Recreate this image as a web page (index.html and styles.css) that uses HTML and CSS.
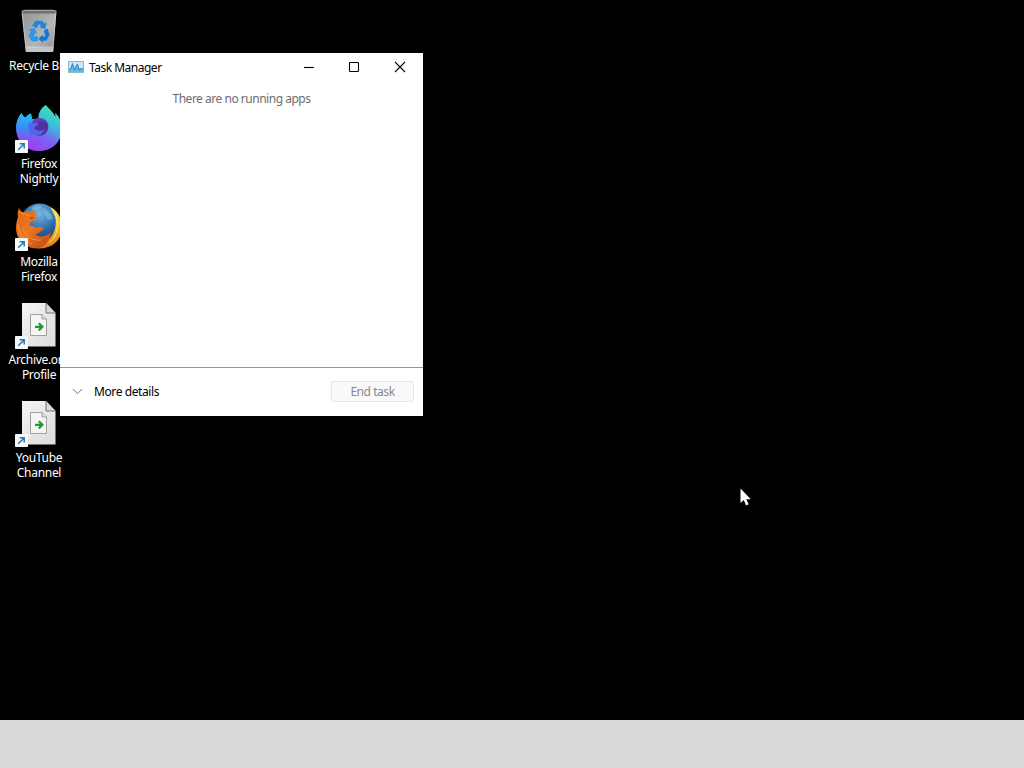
FILE: index.html
```
<!DOCTYPE html>
<html lang="en">
<head>
    <meta charset="utf-8" />
    <meta name="viewport" content="width=device-width, initial-scale=1.0" />
    <title>Desktop</title>
    <link rel="stylesheet" href="styles.css">
</head>
<body>
    <!-- shared shapes -->
    <svg class="defs" width="0" height="0">
        <defs>
            <linearGradient id="paper" x1="0" y1="0" x2="1" y2="1">
                <stop offset="0" stop-color="#f4f4f4"/>
                <stop offset="1" stop-color="#dcdcdc"/>
            </linearGradient>
            <g id="shortcut">
                <rect x="0" y="35" width="13" height="13" rx="0.8" fill="#f5f9fc"/>
                <path d="M3.2 44.8 8.8 39.2M4.6 38.8H9.2V43.6" fill="none" stroke="#2878b4" stroke-width="1.5"/>
            </g>
            <g id="file">
                <path d="M7 2H31L40.5 12V45.5H7Z" fill="url(#paper)"/>
                <path d="M31 2V12H40.5Z" fill="#d6dadb"/>
                <path d="M31 2V12H40.5" fill="none" stroke="#555" stroke-width="0.8"/>
                <path d="M15.5 13.5H27L31.5 18V34.5H15.5Z" fill="#f5f5f5" stroke="#8c8c8c" stroke-width="0.8"/>
                <path d="M27 13.5V18H31.5" fill="#ddd" stroke="#8c8c8c" stroke-width="0.8"/>
                <path d="M20 25.8H27M23.8 22.2 27.4 25.8 23.8 29.4" fill="none" stroke="#12a12c" stroke-width="2.2"/>
            </g>
        </defs>
    </svg>

    <main class="desktop">
        <div class="icons">
            <div class="icon">
                <svg width="48" height="48" viewBox="0 0 48 48">
                    <defs>
                        <linearGradient id="bin" x1="0" y1="0" x2="1" y2="1">
                            <stop offset="0" stop-color="#8f9192"/>
                            <stop offset="0.6" stop-color="#b4b6b7"/>
                            <stop offset="1" stop-color="#8b8d8e"/>
                        </linearGradient>
                    </defs>
                    <path d="M6.5 4 10 3H38L41.5 4 38 45H11Z" fill="url(#bin)"/>
                    <path d="M7 4.5 10 3.5H38L41 4.5 40.5 6.5H7.5Z" fill="#6f7071"/>
                    <path d="M6.7 4.3 10 3.2H38L41.3 4.3" fill="none" stroke="#b5b5b5" stroke-width="0.8"/>
                    <path d="M7.2 6 11.2 44.5M40.8 6 37.8 44.5" stroke="#d6d6d6" stroke-width="0.7"/>
                    <path d="M10.8 41H38.2L38 45H11.2Z" fill="#c2c3c4"/>
                    <path d="M10.8 40.2H38.3" stroke="#e6e6e6" stroke-width="0.8"/>
                    <path d="M17 18.5 20.5 13.8H27.5L29.5 16.5 31.8 15.5 30.2 22 24 20.2 26 18.9 24 17 21.4 21.3Z" fill="#1e87dd"/>
                    <path d="M13.6 22.2 19.6 21 22 27 19.8 26.2 18.6 29.2H23V34.2H17L13.3 29.3 15.8 24.3Z" fill="#2e95e8"/>
                    <path d="M28.8 23.6 32.6 21.6 34.6 27.8 31.3 33.8H27.8V36L23.3 31.7 27.8 27.4V29.5H30.4Z" fill="#1579cf"/>
                </svg>
                <span class="label">Recycle Bin</span>
            </div>

            <div class="icon">
                <svg width="48" height="48" viewBox="0 0 48 48">
                    <defs>
                        <linearGradient id="nightly" x1="0.8" y1="0" x2="0.3" y2="1">
                            <stop offset="0" stop-color="#3fe7b0"/>
                            <stop offset="0.35" stop-color="#38bfdc"/>
                            <stop offset="0.65" stop-color="#7a62f0"/>
                            <stop offset="1" stop-color="#a13cf0"/>
                        </linearGradient>
                        <linearGradient id="head" x1="0.5" y1="0" x2="0.4" y2="1">
                            <stop offset="0" stop-color="#22bdf5"/>
                            <stop offset="0.45" stop-color="#398cf4"/>
                            <stop offset="1" stop-color="#9a42ee" stop-opacity="0"/>
                        </linearGradient>
                    </defs>
                    <path d="M30.7 0C26 3 23.5 7.5 23.5 12.5L20 14.5 17 14 16 8.5C13.5 9.5 11.5 11 10.5 12.5C8.5 12 7.3 10 6.7 8C3 12 1 18 1.2 24C1.8 38 12 46 24 46C38 46 47 36 47 23C47 17 44 11 40 8L40.5 12C38 7 34 3.5 30.7 0Z" fill="url(#nightly)"/>
                    <path d="M6.7 8C3 12 1 18 1.2 24C2 35 8 41 15 43L14 24C16 19 19 18 22 16C20 14 18 14 17 14L16 8.5C13.5 9.5 11.5 11 10.5 12.5C8.5 12 7.3 10 6.7 8Z" fill="url(#head)"/>
                    <ellipse cx="24.5" cy="22" rx="8.8" ry="8.7" fill="#51309f"/>
                    <path d="M18 15.5C23 11 30 13 33 18C29 16 25 16 20 18Z" fill="#5b43b4"/>
                    <path d="M13 18.5C16 17 20 17.5 24 18.5C23 21 19.5 21 19 23.5C22 26 26 26.5 30 24.5C27 31 19 32.5 14.5 27.5Z" fill="#5563ea"/>
                    <use href="#shortcut"/>
                </svg>
                <span class="label">Firefox Nightly</span>
            </div>

            <div class="icon">
                <svg width="48" height="48" viewBox="0 0 48 48">
                    <defs>
                        <radialGradient id="globe" cx="0.5" cy="0.25" r="0.8">
                            <stop offset="0" stop-color="#75b8de"/>
                            <stop offset="0.5" stop-color="#2d71b4"/>
                            <stop offset="1" stop-color="#102b63"/>
                        </radialGradient>
                        <linearGradient id="fox" x1="0" y1="0" x2="0.8" y2="1">
                            <stop offset="0" stop-color="#db6519"/>
                            <stop offset="0.5" stop-color="#ed781f"/>
                            <stop offset="1" stop-color="#c74a14"/>
                        </linearGradient>
                        <linearGradient id="tail" x1="0" y1="0" x2="0" y2="1">
                            <stop offset="0" stop-color="#f8e45b"/>
                            <stop offset="0.5" stop-color="#efc02c"/>
                            <stop offset="1" stop-color="#dd7415"/>
                        </linearGradient>
                    </defs>
                    <circle cx="24.5" cy="20" r="19.5" fill="url(#globe)"/>
                    <path d="M17 5C20 2 24 2 27 4L23 7 18 8ZM28 6C33 7 37 11 38 16L33 17 30 12Z" fill="#8cc8df" opacity="0.5"/>
                    <path d="M35 4C38 9 42 15 40.5 23C39 31 35 37 28 39L22 45.5C36 46.5 46 38 47 26C47.5 18 44 8 35 4Z" fill="url(#tail)"/>
                    <path d="M39 9C45 19 43 34 34 40" fill="none" stroke="#fff08a" stroke-width="0.8"/>
                    <path d="M4 5C5 8 7 9 9 9.2C12 8 15 8 17 9L20 6.5C20 9 19.8 11 21 13L22 16C20 18 16 18 15 20L14.5 23C18 22 20 26 24 24C27 23 29 25 28.5 27C25 27 25 31 20 31C24 35 31 34 36 29C35 39 28 45.5 20 45.5C9 44 1 36 1 25C1 20 2 17 3 14C2 11 3 7 4 5Z" fill="url(#fox)"/>
                    <path d="M4.5 8C6 12 10 11 15 13M3 21C4 31 9 38 17 41M8 26C11 34 18 38 26 37" fill="none" stroke="#f69a38" stroke-width="1"/>
                    <path d="M15 14.5 19 14.2 16.5 16Z" fill="#74320f"/>
                    <use href="#shortcut"/>
                </svg>
                <span class="label">Mozilla Firefox</span>
            </div>

            <div class="icon">
                <svg width="48" height="48" viewBox="0 0 48 48">
                    <use href="#file"/>
                    <use href="#shortcut"/>
                </svg>
                <span class="label">Archive.org Profile</span>
            </div>

            <div class="icon">
                <svg width="48" height="48" viewBox="0 0 48 48">
                    <use href="#file"/>
                    <use href="#shortcut"/>
                </svg>
                <span class="label">YouTube Channel</span>
            </div>
        </div>

        <section class="window">
            <header class="titlebar">
                <svg class="app-icon" width="16" height="12" viewBox="0 0 16 12">
                    <rect x="0.5" y="0.5" width="15" height="11" fill="#c9e9f8" stroke="#91b9cd"/>
                    <path d="M1 11V8L3 7 4.5 2.5 6.5 8.5 8 5 9.5 3 11 8.5 12.5 7 13.5 8.5 15 7V11Z" fill="#69b9e5"/>
                    <path d="M1 8.5 3 7.5 4.5 2.5 6.5 9 8 5.5 9.5 3 11 9 12.5 7 13.5 9 15 7" fill="none" stroke="#217eb6" stroke-width="0.9"/>
                </svg>
                <h1 class="title">Task Manager</h1>
                <div class="controls">
                    <button class="control" aria-label="Minimize">
                        <svg width="12" height="12" viewBox="0 0 12 12"><path d="M1 6.5H11"/></svg>
                    </button>
                    <button class="control" aria-label="Maximize">
                        <svg width="12" height="12" viewBox="0 0 12 12"><rect x="1.5" y="1.5" width="9" height="9" rx="0.8"/></svg>
                    </button>
                    <button class="control close" aria-label="Close">
                        <svg width="12" height="12" viewBox="0 0 12 12"><path d="M1 1 11 11M11 1 1 11"/></svg>
                    </button>
                </div>
            </header>
            <p class="empty">There are no running apps</p>
            <footer class="footer">
                <svg class="chevron" width="11" height="7" viewBox="0 0 11 7"><path d="M0.8 1 5.5 5.7 10.2 1"/></svg>
                <span class="more">More details</span>
                <button class="end-task" disabled>End task</button>
            </footer>
        </section>

        <svg class="cursor" width="12" height="20" viewBox="0 0 12 20">
            <path d="M0.5 0.5V15L3.8 12 6.1 17.4 8.6 16.3 6.3 11.3H10.8Z"/>
        </svg>
    </main>
    <div class="taskbar"></div>
</body>
</html>
```
FILE: styles.css
```
* {
    box-sizing: border-box;
}
body {
    font-family: "Noto Sans", "Open Sans", sans-serif;
    font-size: 12px;
    margin: 0;
    height: 100vh;
    display: flex;
    flex-direction: column;
    background: #000;
    overflow: hidden;
}
.defs {
    position: absolute;
}
.desktop {
    position: relative;
    flex: 1;
    padding-top: 7px;
}
.icons {
    display: flex;
    flex-direction: column;
    width: 78px;
}
.icon {
    display: flex;
    flex-direction: column;
    align-items: center;
    height: 98px;
    color: #fff;
}
.icon svg {
    flex: none;
}
.label {
    width: 68px;
    margin-top: 3px;
    line-height: 15px;
    text-align: center;
    letter-spacing: -0.3px;
}

/* windows float over the desktop icons */
.window {
    position: absolute;
    left: 60px;
    top: 53px;
    width: 363px;
    height: 363px;
    display: flex;
    flex-direction: column;
    background: #fff;
}
.titlebar {
    display: flex;
    align-items: center;
    height: 28px;
    padding-left: 8px;
}
.title {
    margin: 1px 0 0 5px;
    font-size: 12px;
    font-weight: normal;
    letter-spacing: -0.5px;
}
.controls {
    display: flex;
    margin-left: auto;
    height: 100%;
}
.control {
    display: flex;
    align-items: center;
    justify-content: center;
    width: 45px;
    padding: 0 1px 0 0;
    border: none;
    background: none;
}
.close {
    width: 46px;
    padding: 0;
}
.control svg {
    flex: none;
    fill: none;
    stroke: #000;
    stroke-width: 1.1;
}
.empty {
    flex: 1;
    margin: 0;
    padding-top: 10px;
    line-height: 16px;
    text-align: center;
    color: #6d6d6d;
    letter-spacing: -0.48px;
}
.footer {
    display: flex;
    align-items: center;
    height: 49px;
    padding: 0 9px 2px 12px;
    border-top: 1px solid #949494;
}
.chevron {
    fill: none;
    stroke: #777;
}
.more {
    margin-left: 11px;
    letter-spacing: -0.4px;
}
.end-task {
    width: 83px;
    height: 21px;
    margin-left: auto;
    padding: 0;
    border: 1px solid #e6e6e8;
    border-radius: 3px;
    background: #f9f9fb;
    color: #88888c;
    font: inherit;
    letter-spacing: -0.45px;
}
.cursor {
    position: absolute;
    left: 740px;
    top: 488px;
    fill: #fff;
}
.taskbar {
    height: 48px;
    background: #d9d9d9;
}
```
